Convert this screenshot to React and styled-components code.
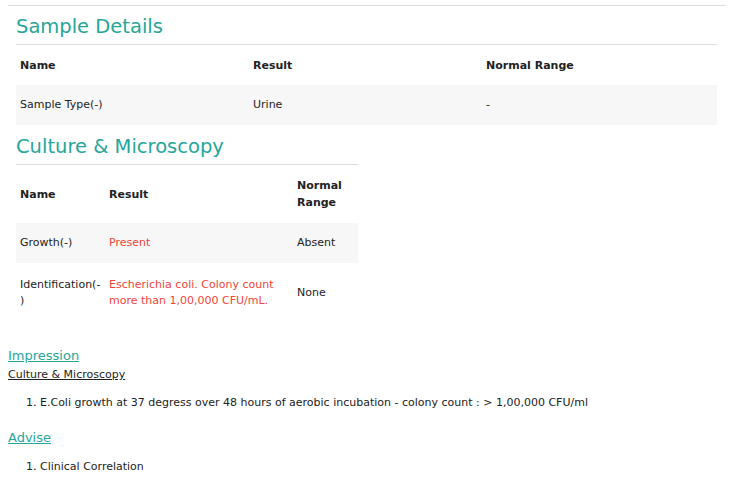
import React from "react";
import styled, { createGlobalStyle } from "styled-components";

const G = createGlobalStyle`
  body { margin: 0; font-family: "DejaVu Sans", sans-serif; color: #222; background: #fff; font-size: 11px; }
`;
const Top = styled.div`height: 5px; border-bottom: 1px solid #ddd; margin: 0 27px 0 8px;`;
const Section = styled.div`padding: 0 36px 0 16px; width: ${p => p.w || "auto"};`;
const H = styled.h2`
  margin: 0; font-weight: normal; font-size: 19.5px; color: #26a69a;
  padding: ${p => p.pt || "10px"} 0 6px; border-bottom: 1px solid #ddd; line-height: 23px;
`;
const T = styled.table`border-collapse: collapse; width: 100%;`;
const Th = styled.th`text-align: left; font-weight: bold; padding: 0 4px; height: ${p => p.h || 40}px; line-height: 17px;`;
const Tr = styled.tr`background: ${p => (p.gray ? "#f7f7f7" : "transparent")};`;
const Td = styled.td`padding: 0 4px; height: ${p => p.h || 40}px; line-height: 16px; color: ${p => (p.red ? "#f0453a" : "#222")}; width: ${p => p.w || "auto"};`;
const Below = styled.div`padding: 24px 8px 0;`;
const Link = styled.div`color: #26a69a; text-decoration: underline; font-size: 13px; line-height: 18px;`;
const Sub = styled.div`text-decoration: underline; line-height: 16px; margin-top: 2px;`;
const Ol = styled.ol`margin: 12px 0 18px; padding-left: 32px; li { line-height: 16px; }`;

export default function App() {
  return (
    <>
      <G />
      <Top />
      <Section>
        <H pt="9px">Sample Details</H>
        <T>
          <thead><tr><Th w="233">Name</Th><Th>Result</Th><Th>Normal Range</Th></tr></thead>
          <tbody><Tr gray><Td w="225px">Sample Type(-)</Td><Td w="225px">Urine</Td><Td>-</Td></Tr></tbody>
        </T>
      </Section>
      <Section w="342px" style={{ paddingRight: 0 }}>
        <H pt="10px">Culture &amp; Microscopy</H>
        <T>
          <thead><tr><Th h={58}>Name</Th><Th h={58}>Result</Th><Th h={58}>Normal<br />Range</Th></tr></thead>
          <tbody>
            <Tr gray><Td w="81px">Growth(-)</Td><Td red w="180px">Present</Td><Td>Absent</Td></Tr>
            <Tr><Td h={60}>Identification(-<br />)</Td><Td red h={60}>Escherichia coli. Colony count more than 1,00,000 CFU/mL.</Td><Td h={60}>None</Td></Tr>
          </tbody>
        </T>
      </Section>
      <Below>
        <Link>Impression</Link>
        <Sub>Culture &amp; Microscopy</Sub>
        <Ol><li>E.Coli growth at 37 degress over 48 hours of aerobic incubation - colony count : &gt; 1,00,000 CFU/ml</li></Ol>
        <Link>Advise</Link>
        <Ol><li>Clinical Correlation</li></Ol>
      </Below>
    </>
  );
}
